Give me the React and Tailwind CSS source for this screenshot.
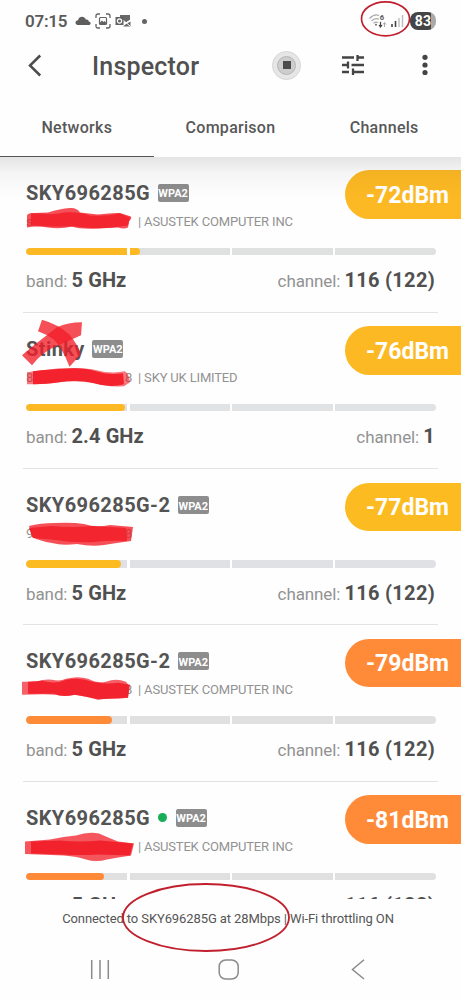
import React from "react";

const ROW_H = 156.25;
const LIST_TOP = 156.5;

const networks = [
  {
    name: "SKY696285G", vendor: "| ASUSTEK COMPUTER INC", dbm: "-72dBm", tone: "bg-[#fdb924]", track: "bg-[#dfe1e0]",
    band: "5 GHz", channel: "116 (122)", level: 114, head: "s", tail: "",
    marks: [
      { d: "M27 215 Q28 212 34 212.5 L48 212 Q60 208 70 207.500 Q77 207 80 212 L98 214 Q112 212 120 212.500 L131 216 Q132 218 129 221 L128 227 Q124 229 118 227 L98 228 Q80 229 72 226 Q60 229 48 227 Q36 225 27 227 Z", o: 0.78 },
      { d: "M31 213 L42 213 Q52 215 64 212 Q78 211 90 215 Q104 216 120 213 L130 217 L128 225 L112 227 Q94 229 76 226 Q62 226 50 226 L31 225 Z", o: 0.85 },
    ],
  },
  {
    name: "Stinky", vendor: "| SKY UK LIMITED", dbm: "-76dBm", tone: "bg-[#fdb924]", track: "bg-[#e0e2e3]",
    band: "2.4 GHz", channel: "1", level: 98.500, head: "8", tail: "8",
    marks: [
      { d: "M27 372 L42 370 Q70 366 92 369 Q110 374 125 371 Q129 374 130 382 L124 386 Q106 387 91 382 Q76 380 58 382 Q48 384 27 384 Z", o: 0.6 },
      { d: "M33 371 Q50 369 64 368.500 Q84 367 96 371 Q108 375 123 373 L124 384 Q110 388 94 383 Q76 379 60 382 Q46 384 33 384 Z", o: 0.95 },
      { d: "M42 319.500 L38 331 Q47 334 54 339.500 Q62 347 69.500 366.500 L81 354 Q77 343 69 334 Q58 324 42 319.500 Z", o: 0.78 },
      { d: "M82 322 L81 335 Q68 341 56 346 Q42 352 32 365 L22 355 Q31 347 41 339.500 Q48 334 57 327 Q68 322 82 322 Z", o: 0.78 },
    ],
  },
  {
    name: "SKY696285G-2", vendor: "", dbm: "-77dBm", tone: "bg-[#fdbb22]", track: "bg-[#dfe1e4]",
    band: "5 GHz", channel: "116 (122)", level: 94.500, head: "9", tail: "8",
    marks: [
      { d: "M29 526 Q40 523 55 523 Q72 522 84 524 Q96 528 110 525 L133 527 L131 541 Q116 543 104 545 Q92 547 77 544 Q62 546 52 543 Q40 541 32 537 Z", o: 0.78 },
      { d: "M29 528 L52 526 Q72 528 92 526 L126 528 L127 541 Q110 540 94 542 Q74 543 56 540 L33 538 Z", o: 0.85 },
    ],
  },
  {
    name: "SKY696285G-2", vendor: "| ASUSTEK COMPUTER INC", dbm: "-79dBm", tone: "bg-[#ff8b39]", track: "bg-[#e0e0e0]",
    band: "5 GHz", channel: "116 (122)", level: 86, head: "", tail: "8",
    marks: [
      { d: "M22 682 L36 682 Q45 679 52 680 Q60 682 66 679 Q78 676 88 679 Q98 684 106 682 Q116 678 126 682 L129 686 L128 698 Q114 700 100 699 Q84 697 76 695 Q66 697 56 695 Q46 694 22 695 Z", o: 0.7 },
      { d: "M28 682 L42 681 Q56 685 66 680 Q80 677 92 682 Q106 685 118 683 L130 685 L128 698 Q108 698 98 700 Q84 696 74 695 Q62 698 54 694 L28 694 Z", o: 0.9 },
    ],
  },
  {
    name: "SKY696285G", vendor: "| ASUSTEK COMPUTER INC", dbm: "-81dBm", tone: "bg-[#ff8b39]", track: "bg-[#e0e0e0]",
    band: "5 GHz", channel: "116 (122)", level: 78, head: "", tail: "", online: true,
    marks: [
      { d: "M25 841 L50 839 Q64 836 76 835 Q88 831 99 833 Q108 837 118 841 L134 843 L131 855 Q118 857 107 859 Q96 862 86 859 Q78 856 64 855 L25 853.500 Z", o: 0.75 },
      { d: "M31 841 L60 840 Q80 842 100 840 L133 843 L130 855 L98 854 Q80 855 62 854 L31 853 Z", o: 0.9 },
    ],
  },
];

function StatusBar() {
  return (
    <div className="relative flex h-[42px] shrink-0 items-center pl-[25px] pr-[25px]">
      <span className="w-[43px] whitespace-nowrap text-[17px] font-semibold leading-5 tracking-[-0.25px] text-[#5b5b5b]">07:15</span>
      <svg className="ml-[7px] h-4 w-4" viewBox="0 0 16 16" fill="#5e5e5e">
        <path d="M3.500 12 C-.7 12-.2 7.400 3 7.200 C4 2.800 9.500 2.600 10.800 6.500 C13 6 13.700 7.500 13.700 8.400 C16.500 8.700 16 12 13.700 12Z" />
      </svg>
      <svg className="ml-1 h-4 w-4" viewBox="0 0 16 16" fill="none" stroke="#626262" strokeWidth="1.300">
        <path d="M1 5V3Q1 1 3 1h2M11 1h2q2 0 2 2v2M15 11v2q0 2-2 2h-2M5 15H3q-2 0-2-2v-2" />
        <rect x="4.500" y="4.500" width="7" height="7" rx="1" strokeWidth="1.200" />
        <path d="M5 11V9.500l2-2 1.500 1.500 1-1L11.500 10v1z" fill="#626262" stroke="none" />
      </svg>
      <svg className="ml-1 h-4 w-4" viewBox="0 0 16 16">
        <path d="M5 2h10v5l-4 2.500L5 7z" fill="#686868" />
        <path d="M8 13.500h7.500V8.500L11 11z" fill="#686868" />
        <path d="M8 7l7.500 6.500M15.500 7L9 11" stroke="#fff" strokeWidth="1" />
        <rect x=".5" y="4" width="8" height="8" fill="#626262" />
        <circle cx="4.500" cy="8" r="2.100" fill="none" stroke="#fff" strokeWidth="1.200" />
      </svg>
      <span className="ml-[11px] size-[5px] rounded-full bg-[#646464]" />
      <svg className="ml-auto mr-[5px] h-5 w-[36px]" viewBox="369 11 36 20" fill="none">
        <path d="M369.500 18.500Q374.500 13.500 379 15.500M371.500 21Q375 17.300 379 19.300M373.500 23.300Q376 21.300 378 22.600" stroke="#aaa" strokeWidth="1.200" />
        <circle cx="376" cy="24.700" r="0.900" fill="#555" />
        <text x="379.800" y="19.800" className="font-['Roboto'] text-[7.5px] font-bold" fill="#555">6</text>
        <path d="M380.500 21.800v4.700M379 25l1.500 2 1.500-2" stroke="#444" strokeWidth="1.200" />
        <path d="M384.500 27v-4M383 24.500l1.500-2 1.500 2" stroke="#aaa" strokeWidth="1" />
        <path d="M392 27v-3M395.500 27v-6" stroke="#444" strokeWidth="1.600" />
        <path d="M399 27v-9M402.500 27V15" stroke="#bbb" strokeWidth="1.400" />
      </svg>
      <span className="flex h-[18px] w-[26px] items-center justify-center rounded-[8px] bg-[linear-gradient(90deg,#454545_82%,#aaa_82%)] text-[14px] font-bold leading-none tracking-[0.1px] text-white">83</span>
      <svg className="absolute left-[360px] top-0 h-[38px] w-[52px]" viewBox="0 0 52 38" fill="none">
        <ellipse cx="25.500" cy="18.800" rx="24" ry="17" stroke="#c11f2d" strokeWidth="1.700" />
      </svg>
    </div>
  );
}

function Header() {
  return (
    <header className="flex h-[48px] shrink-0 items-center">
      <svg className="ml-[27px] h-6 w-4" viewBox="0 0 16 24" fill="none" stroke="#4c4c4c" strokeWidth="2.500">
        <path d="M13.200 1.500L3 11.500l10.200 10" />
      </svg>
      <h1 className="ml-[49px] w-[160px] pt-px text-[25px] font-medium leading-8 tracking-[0.2px] text-[#505050]">Inspector</h1>
      <span className="ml-[20px] mt-[-2px] flex size-[29px] items-center justify-center rounded-full border border-[#d5d5d5] bg-[#e6e6e6]">
        <span className="flex size-[19px] items-center justify-center rounded-full border border-[#b5b5b5] bg-[#cdcdcd]">
          <span className="size-[8px] bg-[#4b4b4b]" />
        </span>
      </span>
      <svg className="ml-[41px] mt-[-2px] h-5 w-[22px]" viewBox="0 0 22 20" fill="none" stroke="#444" strokeWidth="2.300">
        <path d="M0 2.500h12M15.500 2.500H22M15.500 -.5v6.500M0 10h6M9.500 10H22M6 6.500v7M0 17h7M11 17h11M11 13.500v7" />
      </svg>
      <svg className="ml-[58px] mt-[-2px] h-6 w-[6px]" viewBox="0 0 6 24" fill="#444">
        <circle cx="3" cy="4.300" r="2.600" /><circle cx="3" cy="12" r="2.600" /><circle cx="3" cy="19.500" r="2.600" />
      </svg>
    </header>
  );
}

function Tabs() {
  return (
    <nav className="grid h-[67px] shrink-0 grid-cols-3 text-center text-[16px] font-medium leading-5 text-[#585858]">
      <div className="border-b border-[#555] pt-[28px] tracking-[0.28px]">Networks</div>
      <div className="pt-[28px] tracking-[0.28px]">Comparison</div>
      <div className="pt-[28px] tracking-[0.28px]">Channels</div>
    </nav>
  );
}

function SignalBar({ level, tone, track }) {
  return (
    <div className="relative h-[7.5px] w-[409.5px] overflow-hidden rounded-full">
      <div className={`h-full ${track}`} />
      <div className={`absolute left-0 top-0 h-full rounded-full ${tone}`} style={{ width: level }} />
      <div className="absolute inset-0 flex justify-between pl-[101px] pr-[100.5px]">
        <i className="w-[2.5px] bg-white" /><i className="w-[2.5px] bg-white" /><i className="w-[2.5px] bg-white" />
      </div>
    </div>
  );
}

function NetworkRow({ net, index }) {
  return (
    <li className="relative h-[156.25px] shrink-0 px-[26px] pt-6">
      <div className="flex h-6 items-center">
        <span className="whitespace-nowrap text-[20px] font-bold leading-6 tracking-[0.42px] text-[#545454]">{net.name}</span>
        {net.online && <span className="ml-[8px] mr-[1px] size-[9px] rounded-full bg-[#19ad57]" />}
        <span className="ml-[7.5px] flex h-[18px] w-[31px] items-center justify-center rounded-[2px] bg-[#8d8d8d] pt-[2px] text-[11px] font-bold leading-none text-white">WPA2</span>
      </div>
      <div className="mt-[9px] flex h-4 items-center whitespace-nowrap text-[13px] leading-4 tracking-[-0.16px] text-[#929292]">
        <span className="w-[99px]">{net.head}</span>
        <span className="w-[13px]">{net.tail}</span>
        <span>{net.vendor}</span>
      </div>
      <div className="mt-[18px]">
        <SignalBar level={net.level} tone={net.tone} track={net.track} />
      </div>
      <div className="mt-[13px] flex h-6 w-[409px] items-baseline justify-between text-[17px] leading-6 tracking-[-0.1px] text-[#929292]">
        <span>band: <b className="text-[20px] font-bold tracking-[0.1px] text-[#505050]">{net.band}</b></span>
        <span>channel: <b className="text-[20px] font-bold tracking-[0.3px] text-[#505050]">{net.channel}</b></span>
      </div>
      <div className="absolute bottom-0 left-[23px] right-[23px] h-px bg-[#e3e3e3]" />
      <div className={`absolute right-0 top-[13.5px] flex h-[48.5px] w-[116px] items-center rounded-l-full pl-[21px] pt-[3px] text-[23px] font-bold text-white ${net.tone}`}>{net.dbm}</div>
      <svg className="absolute left-0 top-0 h-[156.25px] w-[461px]" viewBox={`0 ${LIST_TOP + index * ROW_H} 461 ${ROW_H}`} fill="#f21d28">
        {net.marks.map((m, i) => <path key={i} d={m.d} opacity={m.o} />)}
      </svg>
    </li>
  );
}

function NavBar() {
  return (
    <div className="flex h-[59px] shrink-0 items-start pt-[18px]">
      <svg className="ml-[90px] h-[22px] w-5" viewBox="0 0 20 22" stroke="#8b8b8b" strokeWidth="1.500"><path d="M1.700 2v19M10 2v19M18.300 2v19" /></svg>
      <svg className="ml-[108px] h-[22px] w-[22px]" viewBox="0 0 22 22" fill="none" stroke="#8b8b8b" strokeWidth="1.500"><rect x="1.200" y="2" width="19" height="19" rx="6.500" /></svg>
      <svg className="ml-[111px] h-[22px] w-[14px]" viewBox="0 0 14 22" fill="none" stroke="#8b8b8b" strokeWidth="1.500"><path d="M13 1.800L1.500 11.500 13 21" /></svg>
    </div>
  );
}

export default function App() {
  return (
    <main className="flex h-[999px] w-[461px] flex-col overflow-hidden bg-[#fefefe] font-['Roboto',sans-serif]">
      <StatusBar />
      <Header />
      <Tabs />
      <section className="relative h-[742px] shrink-0 overflow-hidden">
        <ul className="mt-[-0.5px] flex flex-col">
          {networks.map((n, i) => <NetworkRow key={i} net={n} index={i} />)}
        </ul>
        <div className="absolute inset-x-0 top-0 h-[42px] bg-[linear-gradient(180deg,rgba(0,0,0,0.1)_0%,rgba(0,0,0,0.035)_38%,transparent_100%)]" />
      </section>
      <footer className="relative flex h-[41px] shrink-0 justify-center pt-[12px] text-[13px] leading-4 tracking-[-0.1px] text-[#555]">
        <span className="whitespace-nowrap pr-[5px]">Connected to SKY696285G at 28Mbps | Wi-Fi throttling ON</span>
        <svg className="absolute left-[120px] top-[-17px] h-[72px] w-[172px]" viewBox="120 882 172 72" fill="none">
          <ellipse cx="206" cy="917.500" rx="83" ry="33.500" stroke="#c11f2d" strokeWidth="1.800" />
        </svg>
      </footer>
      <NavBar />
    </main>
  );
}
